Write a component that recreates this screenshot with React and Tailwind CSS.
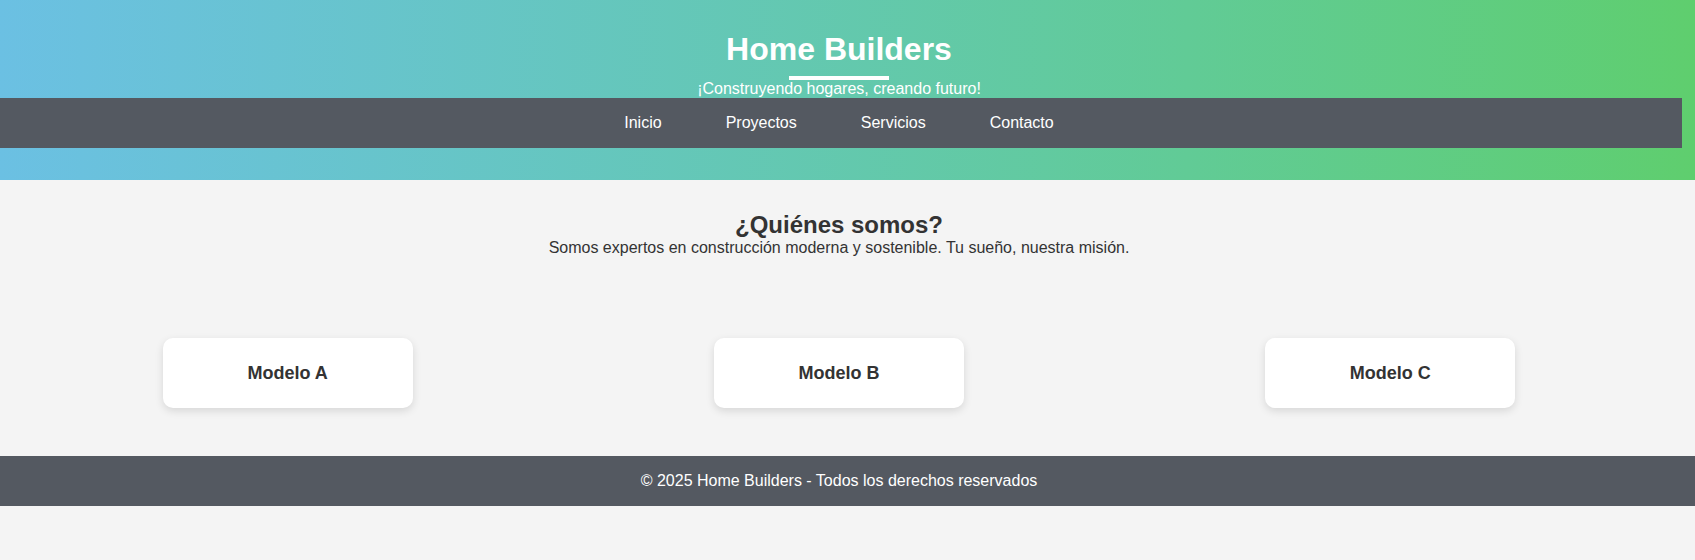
import React from "react";

const links = ["Inicio", "Proyectos", "Servicios", "Contacto"];
const models = ["Modelo A", "Modelo B", "Modelo C"];

const App = () => {
  return (
    <div className="min-h-[560px] bg-[#f4f4f4] font-['Liberation_Sans',Arial,sans-serif] text-[#333] overflow-hidden">
      {/* Header */}
      <header className="bg-gradient-to-r from-[#6bc0e3] to-[#5fce6e] pt-[31px] pb-[32px] text-white">
        <div className="w-[1678px] flex flex-col items-center">
          <h1 className="text-[32px] leading-[37px] font-bold">Home Builders</h1>
          <div className="mt-[8px] h-[4px] w-[100px] bg-white" />
          <p className="text-base leading-[18px]">¡Construyendo hogares, creando futuro!</p>
        </div>
        <nav className="w-[1682px] h-[50px] bg-[#545961] flex items-center justify-center pr-[4px]">
          {links.map((link) => (
            <a key={link} href="#" className="mx-8 text-base text-white">
              {link}
            </a>
          ))}
        </nav>
      </header>

      {/* About */}
      <section className="w-[1678px] pt-[31px] text-center">
        <h2 className="text-2xl font-bold leading-[28px]">¿Quiénes somos?</h2>
        <p className="text-base leading-[18px]">
          Somos expertos en construcción moderna y sostenible. Tu sueño, nuestra misión.
        </p>
      </section>

      {/* Models */}
      <section className="w-[1678px] px-3 pt-[81px] pb-[48px] flex justify-around">
        {models.map((model) => (
          <div
            key={model}
            className="w-[250px] h-[70px] bg-white rounded-[10px] shadow-[0_3px_8px_rgba(0,0,0,0.12)] flex items-center justify-center"
          >
            <h3 className="text-lg font-bold">{model}</h3>
          </div>
        ))}
      </section>

      {/* Footer */}
      <footer className="h-[50px] bg-[#545961] text-white flex items-center">
        <p className="w-[1678px] text-center text-base">
          © 2025 Home Builders - Todos los derechos reservados
        </p>
      </footer>
    </div>
  );
};

export default App;
